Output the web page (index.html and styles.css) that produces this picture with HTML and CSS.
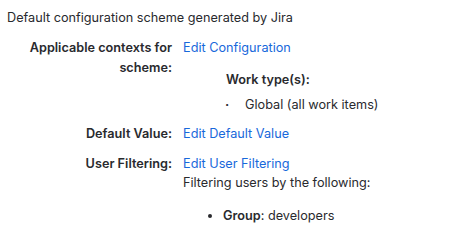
FILE: index.html
```html
<!DOCTYPE html>
<html>
<head>
<meta charset="utf-8">
<link rel="stylesheet" href="styles.css">
</head>
<body>
<div class="intro">Default configuration scheme generated by Jira</div>
<div class="fields">
  <div class="label">Applicable contexts for scheme:</div>
  <div class="value">
    <a class="link" href="#">Edit Configuration</a>
    <div class="context">
      <div class="context-title">Work type(s):</div>
      <ul class="dot-list">
        <li><span class="dot">·</span>Global (all work items)</li>
      </ul>
    </div>
  </div>
  <div class="label">Default Value:</div>
  <div class="value"><a class="link" href="#">Edit Default Value</a></div>
  <div class="label">User Filtering:</div>
  <div class="value">
    <a class="link" href="#">Edit User Filtering</a>
    <div class="filter-desc">Filtering users by the following:</div>
    <ul class="disc-list">
      <li><strong>Group</strong>: developers</li>
    </ul>
  </div>
</div>
</body>
</html>
```

FILE: styles.css
```css
html, body {
  margin: 0;
  background: #ffffff;
}
body {
  padding: 8px 7px 7px;
  font-family: Inter, "Noto Sans", sans-serif;
  font-size: 12.7px;
  line-height: 20px;
  color: #292a2e;
}
.intro {
  line-height: 20px;
}
.fields {
  display: grid;
  grid-template-columns: 165px 1fr;
  column-gap: 11px;
  row-gap: 10px;
  margin-top: 10px;
}
.label {
  text-align: right;
  font-weight: 600;
}
.link {
  color: #1868db;
  text-decoration: none;
}
.context {
  margin-left: 43px;
  margin-top: 12px;
}
.context-title {
  font-weight: 600;
  line-height: 20px;
}
.dot-list {
  list-style: none;
  margin: 6px 0 0 0;
  padding: 0;
  line-height: 18px;
}
.dot {
  display: inline-block;
  width: 20px;
  margin-left: -1px;
  font-weight: 700;
}
.filter-desc {
  margin-top: -1px;
}
.disc-list {
  margin: 13px 0 0 0;
  padding-left: 40px;
}
.disc-list strong {
  font-weight: 600;
}
```
